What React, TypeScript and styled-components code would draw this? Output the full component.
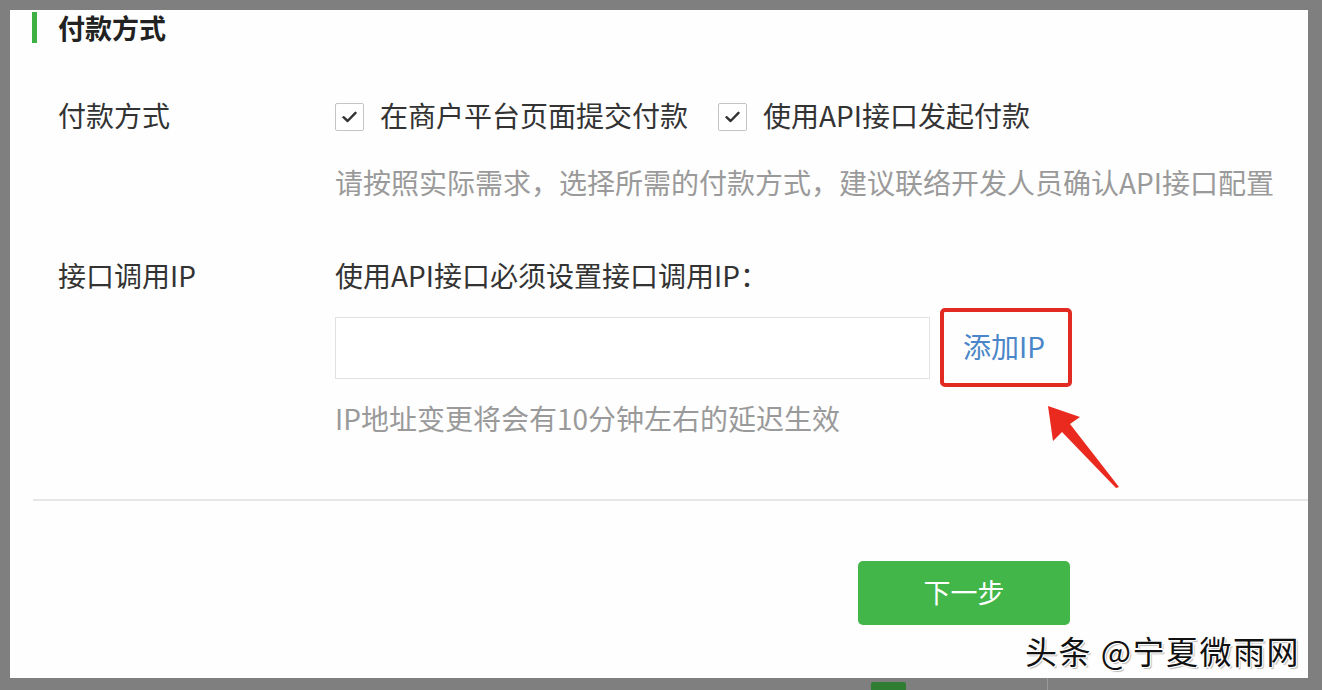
import React, { FC } from "react";
import styled, { createGlobalStyle } from "styled-components";

const GlobalStyle = createGlobalStyle`
  html, body {
    margin: 0;
    padding: 0;
    background: #7f7f7f;
    overflow: hidden;
  }
  body {
    font-family: "Noto Sans CJK SC", "Noto Sans", "Liberation Sans", sans-serif;
  }
`;

const CheckIcon: FC = () => (
  <svg width="15" height="12" viewBox="0 0 15 12" fill="none">
    <path d="M1.5 6.2 L5.6 10 L13.5 1.8" stroke="#333" strokeWidth="2.4" strokeLinecap="round" strokeLinejoin="round" />
  </svg>
);

const Checkbox: FC<{ label: string }> = ({ label }) => (
  <CheckItem>
    <Box>
      <CheckIcon />
    </Box>
    <span>{label}</span>
  </CheckItem>
);

export default function App() {
  return (
    <Page>
      <GlobalStyle />
      <Panel>
        <Title>
          <TitleBar />
          <span>{"付款方式"}</span>
        </Title>

        <Form>
          <Row>
            <Label>{"付款方式"}</Label>
            <Content>
              <Checks>
                <Checkbox label={"在商户平台页面提交付款"} />
                <Checkbox label={"使用API接口发起付款"} />
              </Checks>
              <Hint $top={27}>
                {"请按照实际需求，选择所需的付款方式，建议联络开发人员确认API接口配置"}
              </Hint>
            </Content>
          </Row>

          <Row $top={53}>
            <Label>{"接口调用IP"}</Label>
            <Content>
              <Line>{"使用API接口必须设置接口调用IP："}</Line>
              <InputRow>
                <Input />
                <AddLink>{"添加IP"}</AddLink>
                <Arrow width="100" height="100" viewBox="0 0 100 100">
                  <polygon points="18,13 50,24 40,31 89,94 86,95 32,39 23,48" fill="#ea2a1f" />
                </Arrow>
              </InputRow>
              <Hint $top={11}>{"IP地址变更将会有10分钟左右的延迟生效"}</Hint>
            </Content>
          </Row>
        </Form>

        <Divider />

        <Footer>
          <NextButton>{"下一步"}</NextButton>
        </Footer>

        <Watermark>{"头条 @宁夏微雨网"}</Watermark>
      </Panel>
      <BottomStrip>
        <GreenTab />
        <StripLine />
      </BottomStrip>
    </Page>
  );
}

const Page = styled.div`
  width: 1322px;
  height: 690px;
  padding: 10px 14px 0 10px;
  box-sizing: border-box;
  background: #7f7f7f;
`;

const Panel = styled.div`
  position: relative;
  height: 668px;
  background: #fefefe;
  box-sizing: border-box;
  padding-top: 2px;
`;

const Title = styled.div`
  display: flex;
  align-items: center;
  gap: 21px;
  height: 31px;
  margin-left: 22px;
  font-size: 27px;
  font-weight: 700;
  color: #222;
`;

const TitleBar = styled.div`
  width: 5px;
  height: 31px;
  background: #3cb043;
`;

const Form = styled.div`
  padding-left: 48px;
  margin-top: 52px;
  font-size: 28px;
  line-height: 40px;
  color: #333;
`;

const Row = styled.div<{ $top?: number }>`
  display: grid;
  grid-template-columns: 277px 1fr;
  margin-top: ${(p) => p.$top ?? 0}px;
`;

const Label = styled.div`
  color: #333;
`;

const Content = styled.div`
  display: flex;
  flex-direction: column;
`;

const Checks = styled.div`
  display: flex;
  align-items: center;
  gap: 30px;
`;

const CheckItem = styled.label`
  display: flex;
  align-items: center;
  gap: 16px;
`;

const Box = styled.span`
  display: flex;
  align-items: center;
  justify-content: center;
  width: 29px;
  height: 28px;
  margin-top: 4px;
  box-sizing: border-box;
  border: 1px solid #c4c4c4;
  border-radius: 2px;
  background: #fff;
`;

const Hint = styled.div<{ $top: number }>`
  margin-top: ${(p) => p.$top}px;
  color: #9a9a9a;
  white-space: nowrap;
`;

const Line = styled.div`
  color: #333;
`;

const InputRow = styled.div`
  position: relative;
  display: flex;
  align-items: center;
  gap: 10px;
  margin-top: 13px;
`;

const Input = styled.div`
  width: 595px;
  height: 62px;
  box-sizing: border-box;
  border: 1px solid #e2e2e2;
  background: #fff;
`;

const AddLink = styled.a`
  display: flex;
  align-items: center;
  width: 132px;
  height: 79px;
  box-sizing: border-box;
  padding: 0 0 3px 19px;
  border: 4px solid #e12a22;
  border-radius: 5px;
  color: #4a86c8;
  cursor: pointer;
`;

const Arrow = styled.svg`
  position: absolute;
  left: 695px;
  top: 85px;
`;

const Divider = styled.div`
  height: 2px;
  margin: 61px 0 0 23px;
  background: #e6e6e6;
`;

const Footer = styled.div`
  display: flex;
  padding-left: 848px;
  margin-top: 60px;
`;

const NextButton = styled.button`
  width: 212px;
  height: 64px;
  padding-bottom: 4px;
  border: none;
  border-radius: 5px;
  background: #42b649;
  color: #fff;
  font-family: inherit;
  font-size: 27px;
  cursor: pointer;
`;

const Watermark = styled.div`
  position: absolute;
  right: 8px;
  bottom: 8px;
  font-size: 32px;
  line-height: 40px;
  letter-spacing: 1.5px;
  color: #111;
  text-shadow: 1px 1px 0 #fff, -1px -1px 0 #fff, 1px -1px 0 #fff, -1px 1px 0 #fff, 2px 2px 1px #bbb;
`;

const BottomStrip = styled.div`
  display: flex;
  align-items: flex-end;
  height: 12px;
  padding-left: 861px;
`;

const GreenTab = styled.div`
  width: 35px;
  height: 8px;
  border-radius: 2px 2px 0 0;
  background: #2f7d32;
`;

const StripLine = styled.div`
  width: 1px;
  height: 12px;
  margin-left: 141px;
  background: #9a9a9a;
`;
